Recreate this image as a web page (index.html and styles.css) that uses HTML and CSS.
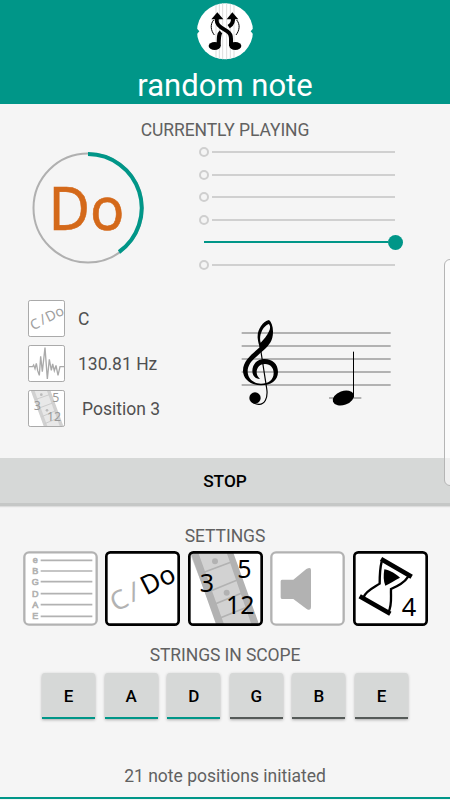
FILE: index.html
```html
<!DOCTYPE html>
<html lang="en">
<head>
<meta charset="utf-8">
<title>random note</title>
<link rel="stylesheet" href="styles.css">
</head>
<body>
<header class="header">
  <svg class="logo" viewBox="225 0 180 186">
    <circle cx="315" cy="94" r="84" fill="#fff"/>
    <path d="M288 14V174M298 12V177M308 10V178M320 10V178M331 12V177M342 14V174" stroke="#ddd" stroke-width="3"/>
    <path d="M229 84l9 10-9 10zM401 84l-9 10 9 10z" fill="#009688"/>
    <path d="M292 50C287 66 291 74 303 82L322 94C331 100 333 106 333 116V138M338 50C341 62 337 73 326 80M303 96C297 101 296 108 296 138" fill="none" stroke="#000" stroke-width="12"/>
    <path d="M274 58L292 37 310 58zM320 58L337 37 355 58z"/>
    <path d="M281 60C270 73 272 91 283 105M350 60C361 73 359 91 348 105" fill="none" stroke="#000" stroke-width="3"/>
    <ellipse cx="284" cy="138" rx="18" ry="12"/><ellipse cx="346" cy="138" rx="18" ry="12"/>
  </svg>
  <h1 class="title">random note</h1>
</header>
<main>
  <h2 class="heading">CURRENTLY PLAYING</h2>
  <section class="playing">
    <svg class="dial" viewBox="0 0 112 112">
      <circle cx="56" cy="56" r="54.5" fill="none" stroke="#b0b0b0" stroke-width="2"/>
      <path d="M56 2A54 54 0 0 1 87 100" fill="none" stroke="#009688" stroke-width="4"/>
      <text class="noto" x="16.500" y="78" font-size="61" textLength="76" lengthAdjust="spacingAndGlyphs" fill="#d4691a" stroke="#d4691a" stroke-width=".6">Do</text>
    </svg>
    <div class="sliders">
      <div class="slider"><i class="ring"></i><i class="track"></i></div>
      <div class="slider"><i class="ring"></i><i class="track"></i></div>
      <div class="slider"><i class="ring"></i><i class="track"></i></div>
      <div class="slider"><i class="ring"></i><i class="track"></i></div>
      <div class="slider active"><i class="track"></i><i class="thumb"></i></div>
      <div class="slider"><i class="ring"></i><i class="track"></i></div>
    </div>
  </section>
  <section class="details">
    <div class="facts">
      <div class="fact">
        <svg class="small" viewBox="0 0 111 111"><rect class="frame" x="1.5" y="1.5" width="108" height="108" rx="5"/>
          <g class="noto" fill="#a0a0a0" font-size="42"><text transform="translate(20 72) rotate(-26)" x="-13" y="15">C</text><text transform="translate(44 58) rotate(-26)" x="-8" y="15">/</text><text transform="translate(68 47) rotate(-26)" x="-15" y="15">Do</text></g></svg>
        <span>C</span>
      </div>
      <div class="fact">
        <svg class="small" viewBox="0 0 111 111"><rect class="frame" x="1.5" y="1.5" width="108" height="108" rx="5"/>
          <path d="M3 65H14L17 60 21 71 25 55 29 77 34 91 38 34 43 80 51 8 58 102 64 43 70 76 74 57 79 77 84 61 90 91 96 65H108" fill="none" stroke="#aaa" stroke-width="4"/></svg>
        <span>130.81 Hz</span>
      </div>
      <div class="fact">
        <svg class="small" viewBox="0 0 111 111"><rect class="frame" x="1.5" y="1.5" width="108" height="108" rx="5"/>
          <path d="M9 3H66L104 108H48z" fill="#e8e8e8"/>
          <path d="M9 3H20L58 108H47zM57 3H68L106 108H95z" fill="#d1d1d1"/>
          <path d="M21 29L64 14M31 55L74 39M41 80L84 62M50 101L91 84" stroke="#ccc" stroke-width="3"/>
          <circle cx="40" cy="14" r="4" fill="#bbb"/><circle cx="57" cy="61" r="4" fill="#bbb"/>
          <g class="noto" fill="#999" font-size="37"><text x="17" y="60">3</text><text x="73" y="37">5</text><text x="57" y="92">12</text></g></svg>
        <span class="position">Position 3</span>
      </div>
    </div>
    <svg class="staff" viewBox="0 0 510 315">
      <path d="M35 69H482M35 108H482M35 147H482M35 186H482M35 225H482M297 264H394" stroke="#b2b2b2" stroke-width="6"/>
      <path fill-rule="evenodd" d="M117 30C98 34 81 60 83 84C84 96 87 104 89 112C67 132 39 152 39 182C39 208 64 226 93 226C122 226 144 212 144 186C144 162 127 147 104 147C82 147 67 162 67 183C67 198 77 206 90 207C83 200 80 195 80 187C80 172 90 162 105 162C122 162 131 174 131 189C131 210 115 221 93 221C70 221 53 206 53 184C53 160 75 143 99 122C118 105 129 92 129 65C129 48 124 36 117 30ZM116 42C121 46 122 54 117 64C112 76 102 88 92 98C86 80 96 50 116 42Z"/>
      <path d="M90 106L110 235C115 265 103 284 86 283C77 283 70 279 66 274" fill="none" stroke="#000" stroke-width="3.5"/>
      <circle cx="75" cy="264" r="17"/>
      <ellipse cx="340" cy="264" rx="33" ry="21" transform="rotate(-20 340 264)"/>
      <path d="M370.500 125V262" stroke="#000" stroke-width="3"/>
    </svg>
  </section>
  <button class="stop">STOP</button>
  <h2 class="heading settings-heading">SETTINGS</h2>
  <section class="settings">
    <svg class="tile" viewBox="0 0 225 225">
      <rect x="4" y="4" width="217" height="217" rx="14" fill="#fff" stroke="#b2b2b2" stroke-width="7"/>
      <path d="M53 28H208M53 60H208M53 92H208M53 128H208M53 161H208M53 196H208" stroke="#b2b2b2" stroke-width="5"/>
      <g class="sans" fill="#b2b2b2" stroke="#b2b2b2" stroke-width="2" font-size="27" text-anchor="middle"><text x="37" y="35">e</text><text x="37" y="69">B</text><text x="37" y="102">G</text><text x="37" y="137">D</text><text x="37" y="171">A</text><text x="37" y="204">E</text></g>
    </svg>
    <svg class="tile" viewBox="0 0 225 225">
      <rect x="4" y="4" width="217" height="217" rx="12" fill="#fff" stroke="#000" stroke-width="8"/>
      <g class="noto" font-size="79"><text transform="translate(43 147) rotate(-27)" x="-26" y="28" fill="#b2b2b2">C</text><text transform="translate(86 122) rotate(-20)" x="-15" y="28" fill="#b2b2b2">/</text><text transform="translate(138 96) rotate(-27)" x="-30" y="28">Do</text></g>
    </svg>
    <svg class="tile" viewBox="0 0 225 225">
      <rect x="4" y="4" width="217" height="217" rx="12" fill="#fff"/>
      <path d="M5 5H130L212 220H88z" fill="#d2d2d2"/>
      <path d="M8 5H31L108 220H84zM116 5H136L213 220H190z" fill="#b2b2b2"/>
      <path d="M42 66L128 34M62 122L146 88M79 160L160 127M96 201L178 168" stroke="#b2b2b2" stroke-width="5"/>
      <circle cx="81" cy="31" r="9" fill="#b2b2b2"/><circle cx="116" cy="125" r="9" fill="#b2b2b2"/>
      <rect x="4" y="4" width="217" height="217" rx="12" fill="none" stroke="#000" stroke-width="8"/>
      <g class="noto" font-size="75"><text x="35" y="124">3</text><text x="148" y="80">5</text><text x="114" y="189">12</text></g>
    </svg>
    <svg class="tile" viewBox="0 0 225 225">
      <rect x="4" y="4" width="217" height="217" rx="14" fill="#fff" stroke="#b2b2b2" stroke-width="7"/>
      <path d="M36 86H70L109 54Q123 46 123 57V168Q123 182 109 173L70 144H36Q32 144 32 139V91Q32 86 36 86Z" fill="#b2b2b2"/>
    </svg>
    <svg class="tile" viewBox="0 0 225 225">
      <rect x="4" y="4" width="217" height="217" rx="12" fill="#fff" stroke="#000" stroke-width="8"/>
      <path d="M84 24L176 77M20 136L112 188" stroke="#000" stroke-width="14"/>
      <path d="M86 32C80 55 80 76 80 98C66 108 40 118 32 138M166 76C154 96 134 105 114 114C113 140 118 163 106 184" fill="none" stroke="#000" stroke-width="7"/>
      <path d="M94 55C113 58 129 70 141 80C125 87 111 98 97 104C91 91 91 73 94 55Z"/>
      <text class="noto" x="146" y="194" font-size="76">4</text>
    </svg>
  </section>
  <h2 class="heading strings-heading">STRINGS IN SCOPE</h2>
  <section class="strings">
    <button class="string on">E</button>
    <button class="string on">A</button>
    <button class="string on">D</button>
    <button class="string">G</button>
    <button class="string">B</button>
    <button class="string">E</button>
  </section>
  <p class="status">21 note positions initiated</p>
</main>
<div class="drawer"></div>
</body>
</html>
```

FILE: styles.css
```css
* { box-sizing: border-box; }
body {
  margin: 0;
  width: 450px;
  height: 800px;
  overflow: hidden;
  position: relative;
  background: #f5f5f5;
  color: #616161;
  font-family: Roboto, sans-serif;
}
svg { display: block; flex: none; }
.noto { font-family: "Noto Sans", sans-serif; }
.sans { font-family: "Liberation Sans", sans-serif; }
.header {
  height: 104px;
  background: #009688;
  display: flex;
  flex-direction: column;
  align-items: center;
}
.logo { width: 60px; height: 62px; }
.title {
  margin: 6px 0 0;
  font-size: 31px;
  line-height: 36px;
  font-weight: 400;
  color: #fff;
}
.heading {
  margin: 16px 0 0;
  font-size: 17.5px;
  line-height: 20px;
  font-weight: 400;
  letter-spacing: -0.08px;
  text-align: center;
}
.playing {
  display: flex;
  height: 135px;
  padding: 0 0 0 32px;
}
.dial { width: 112px; height: 112px; margin-top: 12px; }
.sliders { margin-left: 55px; width: 206px; padding-top: 1px; }
.slider { display: flex; align-items: center; height: 22.5px; }
.ring {
  width: 10px;
  height: 10px;
  border: 2.500px solid #cfcfcf;
  border-radius: 50%;
}
.track { width: 183px; height: 2px; margin-left: 3px; background: #d0d0d0; }
.active .track { width: 184px; margin-left: 5px; background: #009688; }
.thumb { width: 15px; height: 15px; border-radius: 50%; background: #009688; }
.details { display: flex; height: 183px; padding: 25px 0 0 28px; }
.facts { display: flex; flex-direction: column; gap: 8px; width: 202px; }
.fact {
  display: flex;
  align-items: center;
  gap: 13px;
  height: 37px;
  font-size: 17.5px;
  color: #505050;
}
.small { width: 37px; height: 37px; }
.frame { fill: #fff; stroke: #aaa; stroke-width: 3; }
.position { margin-left: 4px; }
.staff { width: 170px; height: 105px; margin-top: 10px; }
.stop, .string {
  display: block;
  border: 0;
  background: #d6d8d7;
  color: #000;
  font-family: Roboto, sans-serif;
  font-weight: 500;
  text-align: center;
}
.stop {
  width: 100%;
  height: 48px;
  padding: 0;
  border-bottom: 3px solid #c5c7c6;
  font-size: 17.3px;
  box-shadow: 0 1px 1px #ddd;
}
.settings-heading { margin-top: 20px; }
.settings { display: flex; justify-content: space-between; margin: 5px 22.5px 0 22.5px; }
.tile { width: 75px; height: 75px; }
.strings-heading { margin-top: 19px; }
.strings { display: flex; justify-content: space-between; margin: 8px 42px 0; }
.string {
  width: 53px;
  height: 46px;
  padding: 2px 0 0;
  border-bottom: 2px solid #555a58;
  border-radius: 3px 3px 0 0;
  font-size: 17px;
  box-shadow: 0 1px 3px #aaa;
}
.string.on { border-bottom-color: #009688; }
.status {
  margin: 47px 0 0;
  height: 33px;
  border-bottom: 2px solid #009688;
  font-size: 17.5px;
  line-height: 20px;
  text-align: center;
}
.drawer {
  position: absolute;
  left: 444px;
  top: 259px;
  width: 12px;
  height: 227px;
  border: 1px solid #b5b5b5;
  border-radius: 6px;
  background: rgba(255, 255, 255, .6);
}
```
